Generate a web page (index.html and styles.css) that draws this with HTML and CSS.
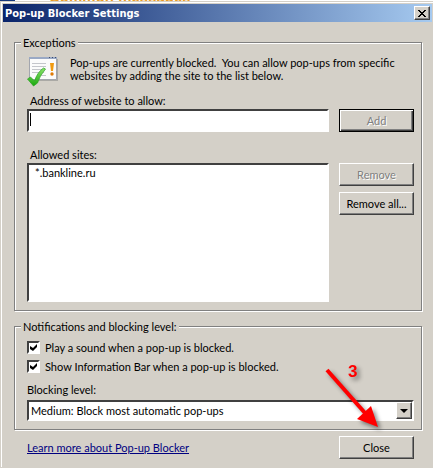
FILE: index.html
```
<!DOCTYPE html>
<html lang="en">
<head>
    <meta charset="UTF-8">
    <meta name="viewport" content="width=device-width, initial-scale=1.0">
    <title>Pop-up Blocker Settings</title>
    <link rel="stylesheet" href="styles.css">
</head>
<body>
    <div class="backdrop">
        <div class="backdrop-text">Common messages</div>
    </div>
    <div class="dialog">
        <div class="title-bar">
            <h1 class="title">Pop-up Blocker Settings</h1>
            <button class="close-x" type="button" aria-label="Close window">
                <svg width="8" height="7" viewBox="0 0 8 7" shape-rendering="crispEdges">
                    <path d="M0 0h2v1h1v1h2v-1h1v-1h2v1h-1v1h-1v1h-1v1h1v1h1v1h1v1h-2v-1h-1v-1h-2v1h-1v1h-2v-1h1v-1h1v-1h1v-1h-1v-1h-1v-1h-1z"/>
                </svg>
            </button>
        </div>
        <form class="content">
            <fieldset class="group">
                <legend>Exceptions</legend>
                <div class="intro">
                    <svg class="intro-icon" width="31" height="32" viewBox="0 0 31 32">
                        <defs>
                            <linearGradient id="tick" x1="0" y1="0" x2="0" y2="1">
                                <stop offset="0" stop-color="#8be36a"/>
                                <stop offset="1" stop-color="#18a80d"/>
                            </linearGradient>
                        </defs>
                        <path d="M4 3h27v22h-27z" fill="#aaa9a5"/>
                        <path d="M2.500 1.500h27v22h-27z" fill="#fbfbfb" stroke="#a3a6ae"/>
                        <path d="M2 1h28v2h-28z" fill="#9aa9c5"/>
                        <path d="M22 1h1v1h-1zM25 1h1v1h-1zM28 1h1v1h-1z" fill="#3d4c6b"/>
                        <path d="M5 7.500h14M5 10.500h14M5 13.500h13M5 16.500h12M14 19.500h5" stroke="#c4c6cb"/>
                        <path d="M23 7h4l-1 8h-2z" fill="#f09a10"/>
                        <circle cx="25" cy="18" r="1.700" fill="#df7b08"/>
                        <path d="M0.500 23l3-2 4 4q3-9 9-13l2 1q-6 7-8 14l-4 3z" fill="url(#tick)" stroke="#28a01f" stroke-width=".7"/>
                    </svg>
                    <p class="intro-text">Pop-ups are currently blocked.&nbsp; You can allow pop-ups from specific websites by adding the site to the list below.</p>
                </div>
                <label class="field-label" for="address">Address of website to allow:</label>
                <div class="row">
                    <div class="address-box">
                        <input class="address" id="address" type="text">
                        <span class="caret"></span>
                    </div>
                    <button class="btn default" type="button" disabled>Add</button>
                </div>
                <label class="field-label sites-label" for="sites">Allowed sites:</label>
                <div class="row">
                    <select class="sites" id="sites" size="8">
                        <option>*.bankline.ru</option>
                    </select>
                    <div class="btn-column">
                        <button class="btn" type="button" disabled>Remove</button>
                        <button class="btn" type="button">Remove all...</button>
                    </div>
                </div>
            </fieldset>
            <fieldset class="group notifications">
                <legend>Notifications and blocking level:</legend>
                <label class="check-row"><input class="check" type="checkbox" checked>Play a sound when a pop-up is blocked.</label>
                <label class="check-row"><input class="check" type="checkbox" checked>Show Information Bar when a pop-up is blocked.</label>
                <label class="level-label" for="level">Blocking level:</label>
                <div class="level-box">
                    <select class="level" id="level">
                        <option>Medium: Block most automatic pop-ups</option>
                    </select>
                    <span class="drop"></span>
                </div>
            </fieldset>
            <div class="footer">
                <a class="link" href="#">Learn more about Pop-up Blocker</a>
                <button class="btn" type="button">Close</button>
            </div>
        </form>
        <div class="callout">
            <span class="step">3</span>
            <svg width="60" height="66" viewBox="0 0 60 66">
                <path d="M4 3l38 43" stroke="#f00" stroke-width="4"/>
                <path d="M55 60l-21-8 14-13z" fill="#f00"/>
            </svg>
        </div>
    </div>
</body>
</html>
```

FILE: styles.css
```
:root{
    --face:#d4d0c8;
    --shade:#808080;
    --dark:#404040;
}
*{
    box-sizing: border-box;
}
body{
    margin: 0;
    background: var(--face);
    font-family: Lato, "Liberation Sans", Arial, sans-serif;
    font-size: 11px;
    line-height: 13px;
    color: #000;
}
button, input, select{
    font: inherit;
    color: inherit;
    margin: 0;
    border-radius: 0;
}
.backdrop{
    height: 1px;
    overflow: hidden;
    background: #fff;
    border-left: 15px solid #16387c;
    display: flex;
    align-items: flex-end;
}
.backdrop-text{
    margin-left: 34px;
    color: #e99b25;
    font-family: "Liberation Sans", Arial, sans-serif;
    font-size: 15px;
    font-weight: bold;
    line-height: 8px;
}
.dialog{
    position: relative;
    border: 1px solid var(--face);
    border-right: 0;
    box-shadow: inset 1px 1px 0 #fff;
    padding: 2px 1px 8px 2px;
}
.title-bar{
    display: flex;
    align-items: center;
    justify-content: space-between;
    height: 18px;
    padding: 0 2px;
    background: linear-gradient(to right, #0a246a, #a6caf0);
}
.title{
    margin: 0;
    color: #fff;
    font-family: "DejaVu Sans Condensed", "DejaVu Sans", sans-serif;
    font-size: 11px;
    font-weight: bold;
    font-stretch: condensed;
}
.close-x{
    display: flex;
    align-items: center;
    justify-content: center;
    width: 16px;
    height: 14px;
    padding: 0;
    background: var(--face);
    border: 1px solid;
    border-color: #fff var(--dark) var(--dark) #fff;
    box-shadow: inset -1px -1px 0 var(--shade);
}
.content{
    padding: 14px 10px 0 11px;
}
.group{
    min-width: 0;
    margin: 0 0 9px;
    padding: 7px 7px 8px 12px;
    border: 1px solid var(--shade);
    box-shadow: 1px 1px 0 #fff, inset 1px 1px 0 #fff;
}
.group legend{
    margin-left: -6px;
    padding: 0 2px;
    background: var(--face);
}
.intro{
    display: flex;
    gap: 12px;
}
.intro-icon{
    flex: none;
}
.intro-text{
    margin: 0;
    padding-right: 12px;
}
.field-label{
    display: block;
    margin: 6px 0 2px 3px;
}
.sites-label{
    margin-top: 16px;
}
.row{
    display: flex;
    gap: 10px;
    align-items: flex-start;
}
.address-box{
    position: relative;
    flex: 1;
    display: flex;
}
.address, .sites, .level{
    width: 100%;
    background: #fff;
    border: 2px solid;
    border-color: var(--dark) #fff #fff var(--dark);
    outline: 0;
}
.address{
    height: 23px;
    padding: 2px;
}
.caret{
    position: absolute;
    left: 3px;
    top: 4px;
    width: 1px;
    height: 13px;
    background: #000;
}
.sites{
    flex: 1;
    height: 139px;
    padding: 0;
    overflow: hidden;
}
.sites option{
    min-height: 13px;
    padding: 1px 6px;
}
.btn-column{
    display: flex;
    flex-direction: column;
    gap: 6px;
}
.btn{
    width: 75px;
    height: 23px;
    padding: 0;
    background: var(--face);
    border: 1px solid;
    border-color: #fff var(--dark) var(--dark) #fff;
    box-shadow: inset -1px -1px 0 var(--shade);
    white-space: nowrap;
}
.btn:disabled{
    color: var(--shade);
    text-shadow: 1px 1px 0 #fff;
}
.btn.default{
    border-color: #000;
    box-shadow: inset 1px 1px 0 #fff, inset -1px -1px 0 var(--dark), inset -2px -2px 0 var(--shade);
}
.group.notifications{
    margin-bottom: 6px;
    padding-top: 8px;
}
.check-row{
    display: flex;
    align-items: center;
    gap: 5px;
    height: 13px;
    margin-bottom: 6px;
}
.check{
    appearance: none;
    display: flex;
    width: 13px;
    height: 13px;
    background: #fff;
    border: 2px solid;
    border-color: var(--dark) #fff #fff var(--dark);
}
.check:checked::before{
    content: "";
    width: 7px;
    height: 7px;
    margin: 1px;
    background: #000;
    clip-path: polygon(0 2px, 3px 4px, 7px 0, 7px 3px, 3px 7px, 0 5px);
}
.level-label{
    display: block;
    margin: 10px 0 4px;
}
.level-box{
    position: relative;
}
.level{
    appearance: none;
    display: block;
    height: 21px;
    padding: 0 20px 0 2px;
}
.drop{
    position: absolute;
    top: 2px;
    right: 2px;
    bottom: 2px;
    width: 16px;
    display: flex;
    align-items: center;
    justify-content: center;
    pointer-events: none;
    background: var(--face);
    border: 1px solid;
    border-color: #fff var(--dark) var(--dark) #fff;
    box-shadow: inset -1px -1px 0 var(--shade);
}
.drop::before{
    content: "";
    border: 4px solid transparent;
    border-top-color: #000;
    border-bottom: 0;
}
.footer{
    display: flex;
    align-items: center;
    justify-content: space-between;
    padding: 0 8px 0 13px;
}
.link{
    color: #000080;
}
.callout{
    position: absolute;
    right: 50px;
    bottom: 34px;
    display: flex;
    pointer-events: none;
    filter: drop-shadow(3px 3px 2px rgba(0, 0, 0, .45));
}
.step{
    position: absolute;
    left: 25px;
    top: -4px;
    color: #f00;
    font-family: "Liberation Sans", Arial, sans-serif;
    font-size: 17px;
    font-weight: bold;
    line-height: 17px;
}
```
